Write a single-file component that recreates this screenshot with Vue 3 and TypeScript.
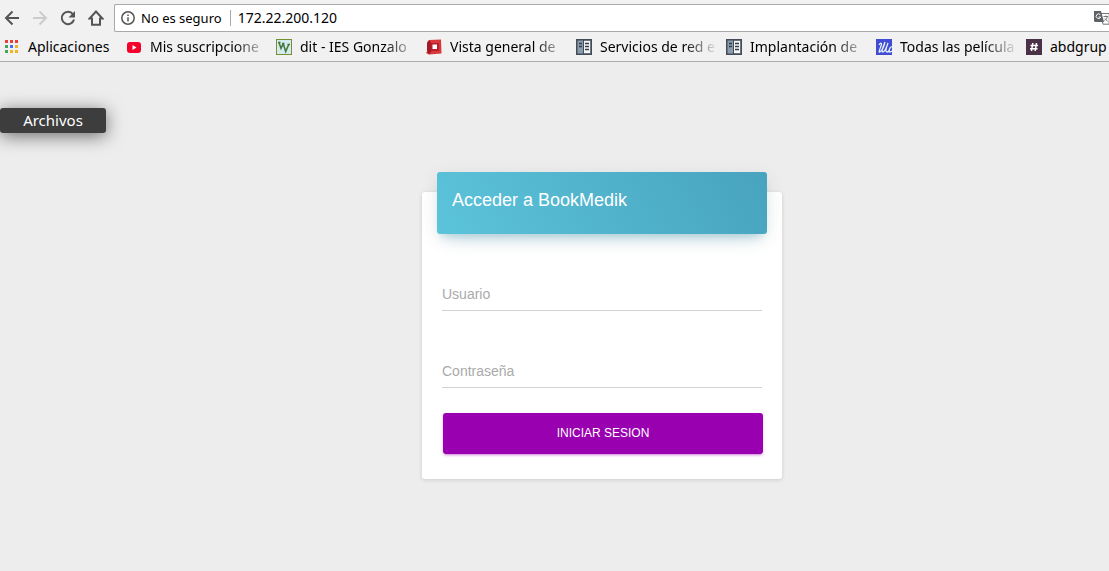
<script setup lang="ts">
import { ref } from 'vue'

interface Bookmark {
  icon: 'apps' | 'youtube' | 'vv' | 'box' | 'server' | 'wave' | 'hash'
  label: string
}

const bookmarks: Bookmark[] = [
  { icon: 'apps', label: 'Aplicaciones' },
  { icon: 'youtube', label: 'Mis suscripcione' },
  { icon: 'vv', label: 'dit - IES Gonzalo' },
  { icon: 'box', label: 'Vista general de' },
  { icon: 'server', label: 'Servicios de red e' },
  { icon: 'server', label: 'Implantación de' },
  { icon: 'wave', label: 'Todas las película' },
  { icon: 'hash', label: 'abdgrup' },
]

const appDots = ['#e8413c', '#e8413c', '#e8413c', '#3fa757', '#4a6cf0', '#efb41f', '#3fa757', '#efb41f', '#efb41f']

const address = ref('172.22.200.120')
const user = ref('')
const password = ref('')
</script>

<template>
  <div class="window">
    <header class="chrome">
      <div class="toolbar">
        <nav class="nav" aria-label="Navegación">
          <button type="button" aria-label="Atrás">
            <svg viewBox="0 0 16 16"><path d="M15 8H2.500M8.500 1.500L2 8l6.500 6.500" /></svg>
          </button>
          <button type="button" aria-label="Adelante" disabled>
            <svg viewBox="0 0 16 16"><path d="M1 8h12.500M7.500 1.500L14 8l-6.500 6.500" /></svg>
          </button>
          <button type="button" aria-label="Recargar">
            <svg viewBox="0 0 16 16"><path d="M13 4.300A6.200 6.200 0 1 0 14 9.500" /><path class="solid" d="M15 1v6.500H8.500z" /></svg>
          </button>
          <button type="button" aria-label="Inicio">
            <svg viewBox="0 0 16 16"><path d="M8 1.500L1.500 8.500H4V14.700h8V8.500h2.500z" /></svg>
          </button>
        </nav>
        <div class="address">
          <svg class="info" viewBox="0 0 14 14">
            <circle cx="7" cy="7" r="6.200" />
            <path d="M7 6.200v4.300M7 3.400v1.600" />
          </svg>
          <span class="secure">No es seguro</span>
          <input v-model="address" class="url" type="text" aria-label="Dirección" />
          <svg class="translate" viewBox="0 0 16 14">
            <path d="M6.500 2.500h8.700v10.700H9z" fill="#fff" stroke="#757575" />
            <path d="M0 0h7l3 11H1.500A1.500 1.500 0 0 1 0 9.500z" fill="#5f6368" />
            <path d="M6.300 3.700A2.300 2.300 0 1 0 6.700 6H4.700" fill="none" stroke="#fff" />
            <path d="M9.500 5.500h4.500M11.800 4.500v1M13.300 5.800c-.5 2-1.600 3-3 4M10.800 7.500l3 3" fill="none" stroke="#757575" />
          </svg>
        </div>
      </div>
      <nav class="bookmarks" aria-label="Marcadores">
        <a v-for="mark in bookmarks" :key="mark.label" class="bookmark" :class="mark.icon" href="#">
          <svg viewBox="0 0 16 16">
            <g v-if="mark.icon === 'apps'">
              <rect
                v-for="(dot, i) in appDots"
                :key="i"
                :x="(i % 3) * 5"
                :y="1 + Math.floor(i / 3) * 5"
                width="3"
                height="3"
                :fill="dot"
              />
            </g>
            <g v-else-if="mark.icon === 'youtube'">
              <rect x="1" y="3" width="14" height="11" rx="3" fill="#f5002d" />
              <path d="M6.500 6v5L10.500 8.500z" fill="#fff" />
            </g>
            <g v-else-if="mark.icon === 'vv'">
              <rect x=".5" y=".5" width="15" height="15" fill="#d3eaf0" stroke="#75902f" />
              <path d="M2 3.500h2.500M3 3.500l2 6L7 5M6 4.500h2.500M7.500 5.500l2.200 7L12.500 6M11.500 5.500h2.500" fill="none" stroke="#44763a" stroke-width="1.500" />
            </g>
            <g v-else-if="mark.icon === 'box'">
              <path d="M3 1l12-.5.5 14L3 15.500 0 14l2-3z" fill="#d8383c" />
              <path d="M3 1L1 3.500v8L3 15.500l3-4V5z" fill="#a31a25" />
              <path d="M5 4h8v8H5z" fill="#b61e2b" />
              <path d="M6.500 5.500h4.500v4.500H6.500z" fill="#fff" />
            </g>
            <g v-else-if="mark.icon === 'server'">
              <rect x=".75" y=".75" width="14.500" height="14.500" fill="#8a9cab" stroke="#454c58" stroke-width="1.500" />
              <rect x="8" y="2" width="6" height="12" fill="#f4f6f7" />
              <path d="M7.500 1v14" stroke="#454c58" />
              <path d="M3 4.500h3M3 7.500h3M9 4.500h4M9 7.500h4M9 10.500h4" stroke="#353d48" stroke-width="1.500" />
            </g>
            <g v-else-if="mark.icon === 'wave'">
              <rect width="16" height="16" fill="#414bd3" />
              <path d="M3 6c2-3 3-2 2 1s-3 7-1 6 4-6 5-10c-2 5-4 10-2 10s4-6 5-9c-2 5-3 9-1 9 1 0 2-1 2-2M16 8c-2-1-4 5-2 5l2-1" fill="none" stroke="#e1f1f4" stroke-width="1.300" />
            </g>
            <g v-else>
              <rect width="16" height="16" fill="#4b3148" />
              <path d="M6.800 4L5.500 12M10.500 4L9.200 12M4.500 6.500h7.500M4 9.700h7.500" stroke="#fff" stroke-width="1.500" />
            </g>
          </svg>
          <span class="label">{{ mark.label }}</span>
        </a>
      </nav>
    </header>

    <div class="tooltip" role="tooltip">Archivos</div>

    <main class="page">
      <section class="card">
        <h1 class="card-title">Acceder a BookMedik</h1>
        <form class="form" @submit.prevent>
          <input v-model="user" class="field" type="text" placeholder="Usuario" aria-label="Usuario" />
          <input v-model="password" class="field" type="password" placeholder="Contraseña" aria-label="Contraseña" />
          <button class="submit" type="submit">Iniciar sesion</button>
        </form>
      </section>
    </main>
  </div>
</template>

<style>
body {
  margin: 0;
  background: #ededed;
}
</style>

<style scoped>
.window {
  position: relative;
  min-height: 100vh;
  overflow: hidden;
  background: #ededed;
  font-family: "Liberation Sans", Arial, sans-serif;
}

.chrome {
  background: #f1f1f1;
  border-bottom: 1px solid #aeaeae;
  color: #000;
  font-family: "Noto Sans", "Open Sans", sans-serif;
  font-size: 14px;
}

.toolbar {
  display: flex;
  align-items: center;
  padding-top: 4px;
}

.nav {
  display: flex;
  gap: 12px;
  padding: 0 10px 0 4px;
}

.nav button {
  width: 16px;
  height: 16px;
  padding: 0;
  border: 0;
  background: none;
}

.nav svg {
  display: block;
  width: 16px;
  height: 16px;
  fill: none;
  stroke: #555;
  stroke-width: 2;
}

.nav button:disabled svg {
  stroke: #ccc;
}

.nav .solid {
  fill: #555;
  stroke: none;
}

.address {
  display: flex;
  flex: 1;
  align-items: center;
  height: 26px;
  padding-left: 6px;
  border: 1px solid #a9a9a9;
  border-right: 0;
  border-radius: 2px 0 0 2px;
  background: #fff;
}

.info {
  width: 14px;
  height: 14px;
  fill: none;
  stroke: #555;
  stroke-width: 1.5;
}

.secure {
  margin: 0 8px 0 6px;
  font-size: 13px;
  line-height: 16px;
  white-space: nowrap;
}

.url {
  flex: 1;
  min-width: 0;
  height: 16px;
  padding: 0 0 0 7px;
  border: 0;
  border-left: 1px solid #aaa;
  background: none;
  color: inherit;
  font: inherit;
  line-height: 16px;
  outline: 0;
}

.translate {
  width: 16px;
  height: 14px;
  margin-right: -1px;
}

.bookmarks {
  display: flex;
  height: 29px;
  padding-left: 5px;
  overflow: hidden;
}

.bookmark {
  display: flex;
  flex: none;
  gap: 8px;
  align-items: center;
  width: 150px;
  color: inherit;
  text-decoration: none;
}

.bookmark.apps {
  gap: 7px;
  width: 121px;
}

.bookmark svg {
  flex: none;
  width: 16px;
  height: 16px;
}

.label {
  white-space: nowrap;
  background: linear-gradient(to right, #000 84px, transparent 118px);
  background-size: 118px 100%;
  background-repeat: no-repeat;
  background-clip: text;
  color: transparent;
}

.apps .label,
.hash .label {
  background: none;
  color: #000;
}

.tooltip {
  position: absolute;
  top: 108px;
  left: 0;
  width: 106px;
  border-radius: 3px;
  background: #3d3d3d;
  box-shadow: 0 3px 18px rgba(0, 0, 0, 0.55);
  color: #fff;
  font-family: "Noto Sans", "Open Sans", sans-serif;
  font-size: 15px;
  line-height: 25px;
  text-align: center;
}

.page {
  display: flex;
  justify-content: center;
  padding: 130px 0 40px 95px;
}

.card {
  width: 360px;
  border-radius: 3px;
  background: #fff;
  box-shadow: 0 1px 4px rgba(0, 0, 0, 0.14);
}

.card-title {
  margin: -20px 15px 0;
  padding: 15px 15px 21px;
  border-radius: 3px;
  background: linear-gradient(60deg, #5bc4da, #48a3be);
  box-shadow: 0 12px 20px -10px rgba(72, 163, 190, 0.28), 0 4px 20px rgba(0, 0, 0, 0.08), 0 7px 8px -5px rgba(72, 163, 190, 0.3);
  color: #fff;
  font-size: 18px;
  font-weight: 400;
  line-height: 26px;
}

.form {
  display: flex;
  flex-direction: column;
  padding: 41px 20px 25px;
}

.field {
  height: 36px;
  margin-bottom: 41px;
  padding: 2px 0 0;
  border: 0;
  border-bottom: 1px solid #d2d2d2;
  border-radius: 0;
  background: none;
  box-sizing: border-box;
  font: 14px "Liberation Sans", Arial, sans-serif;
  outline: 0;
}

.field::placeholder {
  color: #aaa;
  opacity: 1;
}

.field + .field {
  margin-bottom: 25px;
}

.submit {
  height: 41px;
  margin: 0 -1px 0 1px;
  padding: 0 0 2px;
  border: 0;
  border-radius: 3px;
  background: #9900b0;
  box-shadow: 0 2px 2px rgba(153, 0, 176, 0.14), 0 3px 1px -2px rgba(153, 0, 176, 0.2), 0 1px 5px rgba(153, 0, 176, 0.12);
  color: #fff;
  font: 12px "Liberation Sans", Arial, sans-serif;
  text-transform: uppercase;
}
</style>
